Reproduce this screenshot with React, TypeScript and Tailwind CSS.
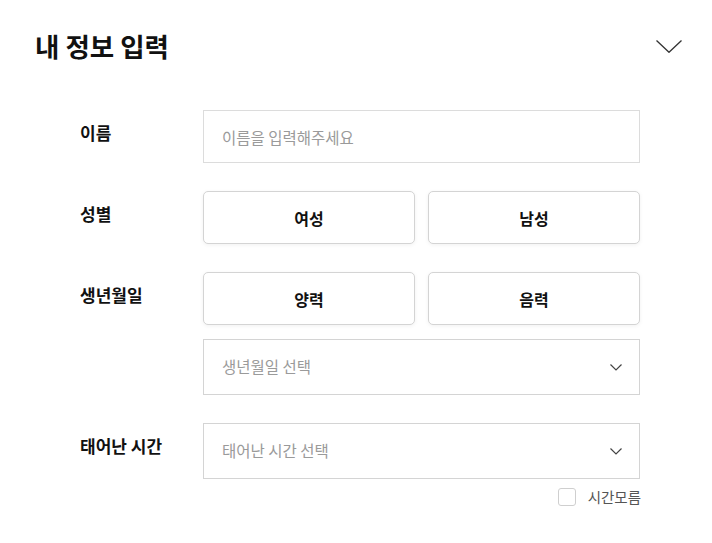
import React, { useState } from "react";

const font = { fontFamily: '"Noto Sans CJK KR", "Noto Sans", sans-serif' };

const ChevronDown = ({ className }: { className?: string }) => (
  <svg viewBox="0 0 12 7" className={className} fill="none" stroke="currentColor" strokeWidth="1.2">
    <path d="M0.5 0.5 L6 6 L11.5 0.5" />
  </svg>
);

const Row = ({ label, children }: { label: string; children: React.ReactNode }) => (
  <div className="flex items-start">
    <div className="w-[123px] shrink-0 pt-[11px] text-[17px] leading-[24px] font-bold text-[#111]">
      {label}
    </div>
    <div className="w-[437px] flex flex-col">{children}</div>
  </div>
);

const ToggleButton = ({ label, active, onClick }: { label: string; active: boolean; onClick: () => void }) => (
  <button
    onClick={onClick}
    className={`flex-1 h-[53px] rounded-[5px] border bg-white text-[16px] font-bold text-[#111] shadow-[0_1px_4px_rgba(0,0,0,0.06)] ${
      active ? "border-[#111]" : "border-[#d4d4d4]"
    }`}
  >
    {label}
  </button>
);

const SelectBox = ({ placeholder }: { placeholder: string }) => (
  <div className="h-[56px] border border-[#d4d4d4] bg-white flex items-center justify-between pl-[18px] pr-[17px]">
    <span className="text-[15.5px] text-[#9a9a9a]">{placeholder}</span>
    <ChevronDown className="w-[12px] h-[7px] text-[#444]" />
  </div>
);

export default function App() {
  const [gender, setGender] = useState<string | null>(null);
  const [calendar, setCalendar] = useState<string | null>(null);
  const [unknownTime, setUnknownTime] = useState(false);

  return (
    <div className="min-h-screen bg-white" style={font}>
      <div className="pl-[35px] pr-[30px] pt-[30px] flex items-center justify-between">
        <h2 className="text-[26.5px] leading-[32px] font-bold text-[#111]">내 정보 입력</h2>
        <svg viewBox="0 0 26 13" className="w-[26px] h-[13px] text-[#333]" fill="none" stroke="currentColor" strokeWidth="1.3">
          <path d="M0.5 0.5 L13 12.3 L25.5 0.5" />
        </svg>
      </div>

      <div className="pl-[80px] pt-[48px] flex flex-col">
        <Row label="이름">
          <input
            placeholder="이름을 입력해주세요"
            className="h-[53px] border border-[#dcdcdc] px-[18px] text-[15.5px] text-[#111] placeholder:text-[#9a9a9a] outline-none"
          />
        </Row>

        <div className="mt-[28px]">
          <Row label="성별">
            <div className="flex gap-[13px]">
              <ToggleButton label="여성" active={gender === "f"} onClick={() => setGender("f")} />
              <ToggleButton label="남성" active={gender === "m"} onClick={() => setGender("m")} />
            </div>
          </Row>
        </div>

        <div className="mt-[28px]">
          <Row label="생년월일">
            <div className="flex gap-[13px]">
              <ToggleButton label="양력" active={calendar === "solar"} onClick={() => setCalendar("solar")} />
              <ToggleButton label="음력" active={calendar === "lunar"} onClick={() => setCalendar("lunar")} />
            </div>
            <div className="mt-[14px]">
              <SelectBox placeholder="생년월일 선택" />
            </div>
          </Row>
        </div>

        <div className="mt-[28px]">
          <Row label="태어난 시간">
            <SelectBox placeholder="태어난 시간 선택" />
            <label className="mt-[7px] self-end mr-[-1px] flex items-center gap-[12px] cursor-pointer">
              <span
                onClick={() => setUnknownTime(!unknownTime)}
                className={`w-[18px] h-[18px] rounded-[3px] border ${
                  unknownTime ? "bg-[#111] border-[#111]" : "border-[#cfcfcf] bg-white"
                }`}
              />
              <span className="text-[14.5px] text-[#555]">시간모름</span>
            </label>
          </Row>
        </div>
      </div>
    </div>
  );
}
